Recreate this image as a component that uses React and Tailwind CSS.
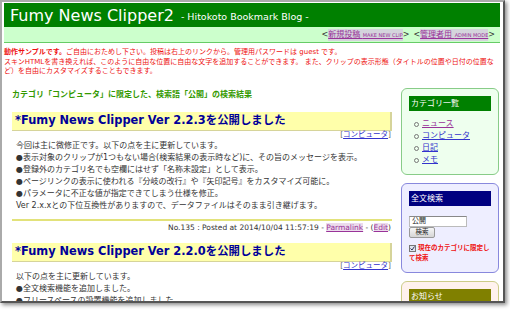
import React from 'react';

const Post = ({ title, lines, footer }) => (
    <div>
        <div className="h-[19px] bg-[#ffffaa] border-r-2 border-b border-[#d6d49a] flex items-center pl-[3px]">
            <span className="text-[11.4px] font-bold text-[#000099] leading-none whitespace-nowrap">{title}</span>
        </div>
        <div className="h-[8px] leading-[8px] text-right text-[7.5px] text-[#666] pr-[1px]">
            [<span className="text-[#3333cc] underline">コンピュータ</span>]
        </div>
        <div className="pl-[4px] pt-[1px] text-[8px] leading-[12px] text-[#333] whitespace-nowrap">
            {lines.map((l, i) => (
                <div key={i}>{l}</div>
            ))}
        </div>
        {footer && (
            <>
                <div className="mt-[7px] h-[2px] bg-[#e2e27a]" />
                <div className="mt-[2px] leading-[10px] text-right text-[7.5px] text-[#333] pr-[1px]">
                    No.135 : Posted at 2014/10/04 11:57:19 - <span className="text-[#993399] underline bg-[#ecdcec]">Parmalink</span> - (<span className="text-[#993399] underline bg-[#ecdcec]">Edit</span>)
                </div>
            </>
        )}
    </div>
);

const SideBox = ({ border, bg, headBg, head, children }) => (
    <div className={`rounded-[6px] border ${border} ${bg} px-[7px] pt-[7px]`}>
        <div className={`h-[15px] ${headBg} text-white text-[8px] leading-[15px] pl-[2px]`}>{head}</div>
        {children}
    </div>
);

export default function App() {
    return (
        <div className="w-[510px] h-[310px] bg-white overflow-hidden font-['DejaVu_Sans','Noto_Sans_CJK_JP',sans-serif]">
            <div className="w-[505px] h-[303px] border-2 border-t-[#aaaaaa] border-l-[#aaaaaa] border-r-[#555555] border-b-[#555555] shadow-[2px_2px_4px_rgba(0,0,0,0.45)] overflow-hidden pl-[2px] pr-[3px] pt-[1px]">
                {/* header */}
                <div className="h-[24px] bg-[#008000] flex items-center pl-[6px] pt-[1px] text-white whitespace-nowrap">
                    <span className="text-[16px] leading-none">Fumy News Clipper2</span>
                    <span className="text-[9.5px] leading-none ml-[7px] mt-[2px]">- Hitokoto Bookmark Blog -</span>
                </div>
                <div className="h-[16px] bg-[#ccffcc] border-b border-[#66cc66] flex items-center justify-end pr-[5px] text-[8px] text-[#333] whitespace-nowrap">
                    &lt;<span className="bg-[#d4d4dc] text-[#993399] underline">新規投稿 <span className="text-[5px]">MAKE NEW CLIP</span></span>&gt;
                    <span className="ml-[4px]">&lt;</span><span className="bg-[#d4d4dc] text-[#993399] underline">管理者用 <span className="text-[5px]">ADMIN MODE</span></span>&gt;
                </div>

                {/* notice */}
                <div className="mt-[5px] text-[7px] leading-[9.7px] text-[#ee1111] whitespace-nowrap">
                    <div><span className="font-bold">動作サンプルです。</span>ご自由におためし下さい。投稿は右上のリンクから。管理用パスワードは guest です。</div>
                    <div>スキンHTMLを書き換えれば、このように自由な位置に自由な文字を追加することができます。 また、クリップの表示形態（タイトルの位置や日付の位置な</div>
                    <div>ど）を自由にカスタマイズすることもできます。</div>
                </div>

                <div className="mt-[11px] flex pl-[8px] pr-[1px] gap-[9px]">
                    {/* main */}
                    <div className="w-[380px] shrink-0">
                        <div className="text-[8px] leading-[14px] font-bold text-[#339900] whitespace-nowrap">カテゴリ「コンピュータ」に限定した、検索語「公開」の検索結果</div>
                        <div className="mt-[10px]">
                            <Post
                                title="*Fumy News Clipper Ver 2.2.3を公開しました"
                                lines={[
                                    '今回は主に微修正です。以下の点を主に更新しています。',
                                    '●表示対象のクリップが1つもない場合(検索結果の表示時など)に、その旨のメッセージを表示。',
                                    '●登録外のカテゴリ名でも空欄にはせず「名称未設定」として表示。',
                                    '●ページリンクの表示に使われる『分岐の改行』や『矢印記号』をカスタマイズ可能に。',
                                    '●パラメータに不正な値が指定できてしまう仕様を修正。',
                                    'Ver 2.x.xとの下位互換性がありますので、データファイルはそのまま引き継げます。',
                                ]}
                                footer
                            />
                        </div>
                        <div className="mt-[10px]">
                            <Post
                                title="*Fumy News Clipper Ver 2.2.0を公開しました"
                                lines={[
                                    '以下の点を主に更新しています。',
                                    '●全文検索機能を追加しました。',
                                    '●フリースペースの設置機能を追加しました。',
                                ]}
                            />
                        </div>
                    </div>

                    {/* sidebar */}
                    <div className="w-[98px] shrink-0 flex flex-col gap-[8px]">
                        <SideBox border="border-[#88cc88]" bg="bg-[#eeffee]" headBg="bg-[#008000]" head="カテゴリ一覧">
                            <ul className="mt-[7px] pb-[8px] text-[8px] leading-[12px]">
                                {['ニュース', 'コンピュータ', '日記', 'メモ'].map((c, i) => (
                                    <li key={c} className="flex items-center">
                                        <span className="ml-[5px] w-[5px] h-[5px] rounded-full border border-[#777]" />
                                        <span className={`ml-[3px] underline ${i === 0 ? 'text-[#993399]' : 'text-[#3333cc]'}`}>{c}</span>
                                    </li>
                                ))}
                            </ul>
                        </SideBox>
                        <SideBox border="border-[#8888dd]" bg="bg-[#eeeeff]" headBg="bg-[#000080]" head="全文検索">
                            <div className="mt-[10px] w-[58px] h-[11px] bg-white border border-[#bbb] border-t-[#888] text-[7px] leading-[9px] pl-[2px] text-[#222]">公開</div>
                            <div className="w-[26px] h-[11px] rounded-[2px] border border-[#999] bg-gradient-to-b from-[#f6f6f6] to-[#d6d6d6] text-[6.5px] leading-[9px] text-center text-[#222]">検索</div>
                            <div className="mt-[5px] pb-[9px] text-[6.5px] leading-[10px] font-bold text-[#ee1111] whitespace-nowrap">
                                <span className="inline-flex align-middle mr-[2px] w-[7px] h-[7px] border border-[#777] bg-[#dde4ee] items-center justify-center">
                                    <svg width="5" height="5" viewBox="0 0 10 10"><path d="M1 5 L4 8 L9 1" stroke="#335" strokeWidth="2" fill="none" /></svg>
                                </span>
                                現在のカテゴリに限定し<br />て検索
                            </div>
                        </SideBox>
                        <SideBox border="border-[#cccc88]" bg="bg-[#fff2ee]" headBg="bg-[#808000]" head="お知らせ">
                            <div className="h-[20px]" />
                        </SideBox>
                    </div>
                </div>
            </div>
        </div>
    );
}
